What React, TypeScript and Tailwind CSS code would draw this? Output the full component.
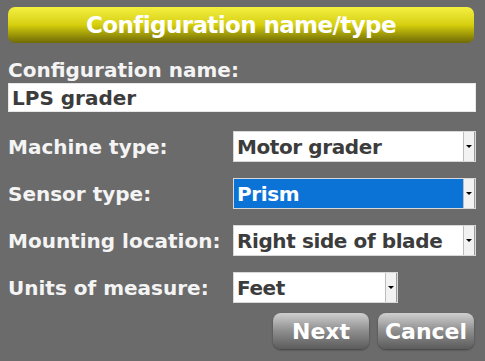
import React from "react";

const font = "font-['DejaVu_Sans',_'Liberation_Sans',_sans-serif]";

const Select = ({
  value,
  width,
  selected = false,
}: {
  value: string;
  width: string;
  selected?: boolean;
}) => (
  <div
    className={`${width} h-[31px] flex border border-[#d8d8d8] ${
      selected ? "bg-[#0b72d6] text-white" : "bg-white text-[#3c3c3c]"
    }`}
  >
    <div className="flex-1 flex items-center pl-[3px] text-[20px] font-bold tracking-[-0.4px] whitespace-nowrap overflow-hidden">
      {value}
    </div>
    <div className="w-[12px] bg-[#f2f2f2] border-l border-[#bdbdbd] border-r border-r-[#9a9a9a] flex items-center justify-center">
      <div className="w-0 h-0 border-l-[3px] border-r-[3px] border-t-[3px] border-l-transparent border-r-transparent border-t-black" />
    </div>
  </div>
);

const Row = ({ label, children }: { label: string; children: React.ReactNode }) => (
  <div className="flex items-center h-[31px]">
    <div className="w-[225px] text-[20px] font-bold text-[#f4f4f4] whitespace-nowrap">
      {label}
    </div>
    {children}
  </div>
);

const NavButton = ({ label }: { label: string }) => (
  <button className="w-[96px] h-[36px] rounded-[8px] bg-gradient-to-b from-[#cfcfcf] via-[#8e8e8e] to-[#5c5c5c] text-white text-[22px] font-bold shadow-[0_1px_2px_rgba(0,0,0,0.4)]">
    {label}
  </button>
);

export default function App() {
  return (
    <div className={`w-[485px] h-[361px] bg-[#6b6b6b] ${font} px-[8px] pt-[7px] overflow-hidden`}>
      <div className="w-[466px] h-[36px] rounded-[7px] bg-gradient-to-b from-[#f4f03e] via-[#d6cf0c] to-[#6f6a06] flex items-center justify-center text-white text-[23px] font-bold tracking-[-0.6px]">
        Configuration name/type
      </div>
      <div className="mt-[16px] text-[20px] font-bold text-[#f4f4f4] leading-[23px]">
        Configuration name:
      </div>
      <div className="mt-[1px] w-[468px] h-[29px] bg-white border border-[#e8e8e8] flex items-center pl-[3px] text-[20px] font-bold text-[#3c3c3c]">
        LPS grader
      </div>
      <div className="mt-[19px] flex flex-col gap-[16px]">
        <Row label="Machine type:">
          <Select value="Motor grader" width="w-[243px]" />
        </Row>
        <Row label="Sensor type:">
          <Select value="Prism" width="w-[243px]" selected />
        </Row>
        <Row label="Mounting location:">
          <Select value="Right side of blade" width="w-[243px]" />
        </Row>
        <Row label="Units of measure:">
          <Select value="Feet" width="w-[165px]" />
        </Row>
      </div>
      <div className="mt-[10px] flex justify-end gap-[9px] pr-[3px]">
        <NavButton label="Next" />
        <NavButton label="Cancel" />
      </div>
    </div>
  );
}
